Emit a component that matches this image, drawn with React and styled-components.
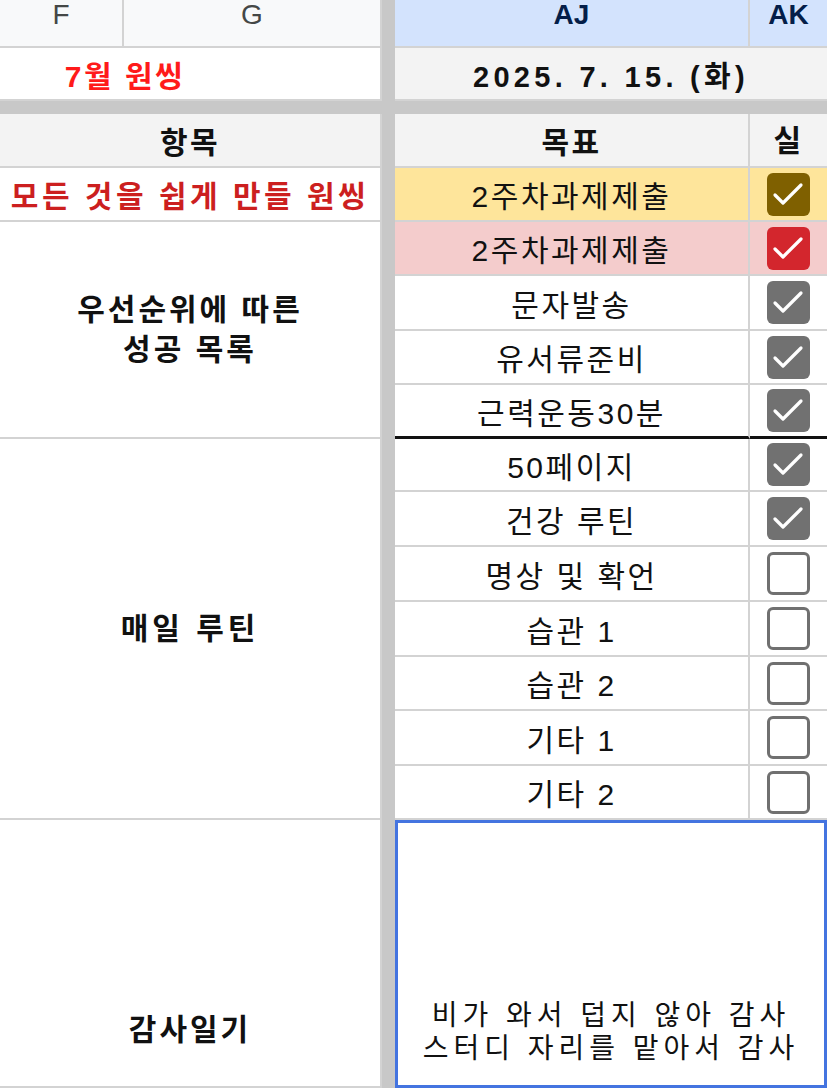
import React from 'react';
import styled, { createGlobalStyle } from 'styled-components';

const GlobalStyle = createGlobalStyle`
    html, body {
        margin: 0;
        padding: 0;
        background: #ffffff;
    }
    body {
        font-family: "Liberation Sans", "Noto Sans CJK KR", sans-serif;
    }
`;

const GRID_LINE = '2px solid #d3d3d3';

const Sheet = styled.div`
    width: 827px;
    height: 1088px;
    overflow: hidden;
    display: grid;
    grid-template-columns: 124px 258px 13px 355px 77px;
    grid-template-rows:
        48px 53px 13px 54px 54px
        54px 55px 54px 54px 53px 55px 55px 55px 54px 55px 54px
        1fr;
`;

const FreezeBar = styled.div`
    background: #c8c8c8;
    grid-column: ${p => (p.$vertical ? '3' : '1 / -1')};
    grid-row: ${p => (p.$vertical ? '1 / -1' : '3')};
`;

const Cell = styled.div`
    box-sizing: border-box;
    display: flex;
    align-items: center;
    justify-content: center;
    text-align: center;
    overflow: hidden;
    white-space: nowrap;
    grid-column: ${p => p.$col};
    grid-row: ${p => p.$row};
    background: ${p => p.$bg || '#ffffff'};
    color: ${p => p.$color || '#111111'};
    border-right: ${p => (p.$noRight ? 'none' : GRID_LINE)};
    border-bottom: ${p => p.$bottom || GRID_LINE};
    font-size: 30px;
    letter-spacing: 2.5px;
    font-weight: ${p => (p.$bold ? 700 : 400)};
`;

const ColHeader = styled(Cell)`
    padding-bottom: 16px;
    font-size: 28px;
    line-height: 28px;
    letter-spacing: 0;
    background: ${p => (p.$selected ? '#d3e3fd' : '#f8f9fa')};
    color: ${p => (p.$selected ? '#041e49' : '#444746')};
    font-weight: ${p => (p.$selected ? 700 : 400)};
`;

const TitleCell = styled(Cell)`
    font-weight: 700;
    font-size: ${p => p.$size || '30px'};
    letter-spacing: ${p => p.$spacing || '2.5px'};
    padding-right: ${p => p.$shift || '0px'};
`;

const StackedHead = styled(Cell)`
    align-items: flex-start;
    white-space: normal;
    padding-top: 6px;
    line-height: 42px;
`;

const Narrow = styled.span`
    display: block;
    width: 1.1em;
    word-break: break-all;
`;

const GroupLabel = styled(Cell)`
    font-weight: 700;
    line-height: 40px;
    letter-spacing: ${p => p.$spacing || '3px'};
    align-items: ${p => (p.$atBottom ? 'flex-end' : 'center')};
    padding-bottom: ${p => (p.$atBottom ? '36px' : '0px')};
`;

const NoteCell = styled(Cell)`
    border: 3px solid #4474e0;
    align-items: flex-end;
    padding-bottom: 20px;
    font-size: 28px;
    letter-spacing: 5px;
    line-height: 33px;
`;

const Box = styled.span`
    box-sizing: border-box;
    width: 43px;
    height: 43px;
    border-radius: 6px;
    display: flex;
    align-items: center;
    justify-content: center;
    background: ${p => (p.$checked ? p.$color : '#ffffff')};
    border: ${p => (p.$checked ? 'none' : '3px solid #707070')};
`;

const Checkbox = ({ checked, color = '#717171' }) => (
    <Box $checked={checked} $color={color}>
        {checked && (
            <svg width="43" height="43" viewBox="0 0 43 43">
                <polyline
                    points="8,22 16,30 34,12"
                    fill="none"
                    stroke="#ffffff"
                    strokeWidth="3.2"
                    strokeLinecap="round"
                    strokeLinejoin="round"
                />
            </svg>
        )}
    </Box>
);

const goals = [
    { text: '2주차과제제출', bg: '#fee59b', box: '#7f6000', checked: true },
    { text: '2주차과제제출', bg: '#f4cccc', box: '#d3262d', checked: true },
    { text: '문자발송', checked: true },
    { text: '유서류준비', checked: true },
    { text: '근력운동30분', checked: true, divider: true },
    { text: '50페이지', checked: true },
    { text: '건강 루틴', checked: true },
    { text: '명상 및 확언' },
    { text: '습관 1' },
    { text: '습관 2' },
    { text: '기타 1' },
    { text: '기타 2' },
];

const App = () => {
    return (
        <>
            <GlobalStyle />
            <Sheet>
                <FreezeBar $vertical />
                <FreezeBar />

                <ColHeader $col="1" $row="1">F</ColHeader>
                <ColHeader $col="2" $row="1">G</ColHeader>
                <ColHeader $col="4" $row="1" $selected>AJ</ColHeader>
                <ColHeader $col="5" $row="1" $selected $noRight>AK</ColHeader>

                <TitleCell $col="1 / 3" $row="2" $color="#ff1a1a" $shift="130px">
                    7월 원씽
                </TitleCell>
                <TitleCell $col="4 / 6" $row="2" $bg="#f3f3f3" $size="29px" $spacing="4.3px" $noRight>
                    2025. 7. 15. (화)
                </TitleCell>

                <Cell $col="1 / 3" $row="4" $bg="#f3f3f3" $bold>항목</Cell>
                <Cell $col="4" $row="4" $bg="#f3f3f3" $bold>목표</Cell>
                <StackedHead $col="5" $row="4" $bg="#f3f3f3" $bold $noRight>
                    <Narrow>실행</Narrow>
                </StackedHead>

                <TitleCell $col="1 / 3" $row="5" $color="#cc1f1f" $spacing="3.5px">
                    모든 것을 쉽게 만들 원씽
                </TitleCell>

                <GroupLabel $col="1 / 3" $row="6 / 10">
                    우선순위에 따른
                    <br />
                    성공 목록
                </GroupLabel>
                <GroupLabel $col="1 / 3" $row="10 / 17" $spacing="4px">매일 루틴</GroupLabel>
                <GroupLabel $col="1 / 3" $row="17" $atBottom>감사일기</GroupLabel>

                {goals.map((goal, i) => {
                    const row = String(5 + i);
                    const bottom = goal.divider ? '3px solid #111111' : undefined;
                    return (
                        <React.Fragment key={i}>
                            <Cell $col="4" $row={row} $bg={goal.bg} $bottom={bottom}>
                                {goal.text}
                            </Cell>
                            <Cell $col="5" $row={row} $bg={goal.bg} $bottom={bottom} $noRight>
                                <Checkbox checked={goal.checked} color={goal.box} />
                            </Cell>
                        </React.Fragment>
                    );
                })}

                <NoteCell $col="4 / 6" $row="17">
                    비가 와서 덥지 않아 감사
                    <br />
                    스터디 자리를 맡아서 감사
                </NoteCell>
            </Sheet>
        </>
    );
};

export default App;
